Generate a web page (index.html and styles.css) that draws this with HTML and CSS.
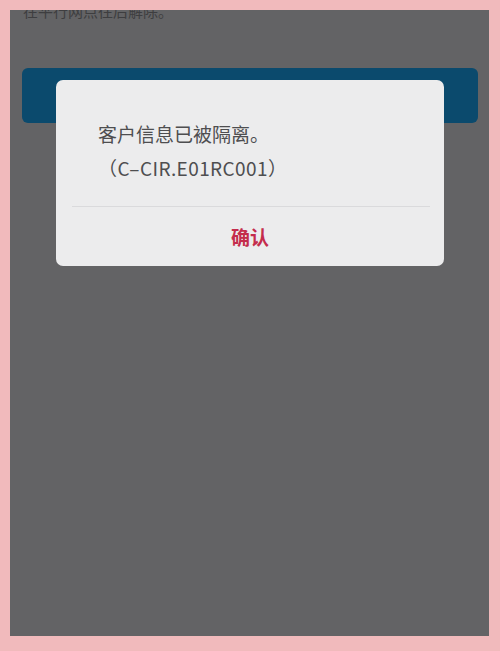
FILE: index.html
```html
<!DOCTYPE html>
<html lang="zh-CN">
<head>
<meta charset="utf-8">
<title>客户信息已被隔离</title>
<link rel="stylesheet" href="styles.css">
</head>
<body>
<div class="frame">
  <div class="screen">
    <p class="top-text">在平行网点往后解除。</p>
    <div class="bar"></div>
    <div class="dialog">
      <div class="dialog-body">
        <p class="msg">客户信息已被隔离。</p>
        <p class="msg code">（C–CIR.E01RC001）</p>
      </div>
      <div class="divider"></div>
      <div class="dialog-actions">
        <span class="confirm">确认</span>
      </div>
    </div>
  </div>
</div>
</body>
</html>
```
FILE: styles.css
```css
html, body {
  margin: 0;
  padding: 0;
}
body {
  background: #f1babc;
  font-family: "Noto Sans CJK SC", "Noto Sans", sans-serif;
  width: 500px;
  height: 651px;
  overflow: hidden;
}
.frame {
  padding: 10px 11px 15px 10px;
}
.screen {
  position: relative;
  height: 626px;
  background: #636365;
  overflow: hidden;
  display: flex;
  flex-direction: column;
}
.top-text {
  margin: -9px 0 0 13px;
  font-size: 15px;
  line-height: 20px;
  color: #3e3e40;
}
.bar {
  margin: 47px 11px 0 12px;
  height: 55px;
  background: #0b4a6d;
  border-radius: 6px;
}
.dialog {
  position: absolute;
  left: 46px;
  top: 70px;
  width: 388px;
  height: 186px;
  background: #ececed;
  border-radius: 7px;
  display: flex;
  flex-direction: column;
}
.dialog-body {
  padding: 37px 0 0 42px;
}
.msg {
  margin: 0;
  font-size: 19px;
  line-height: 34px;
  color: #4e4e50;
}
.code {
  letter-spacing: 0.4px;
}
.divider {
  margin: 21px 14px 0 16px;
  height: 1px;
  background: #dadadc;
}
.dialog-actions {
  flex: 1;
  display: flex;
  align-items: center;
  justify-content: center;
}
.confirm {
  font-size: 19px;
  font-weight: 700;
  color: #c42c4c;
}
```
